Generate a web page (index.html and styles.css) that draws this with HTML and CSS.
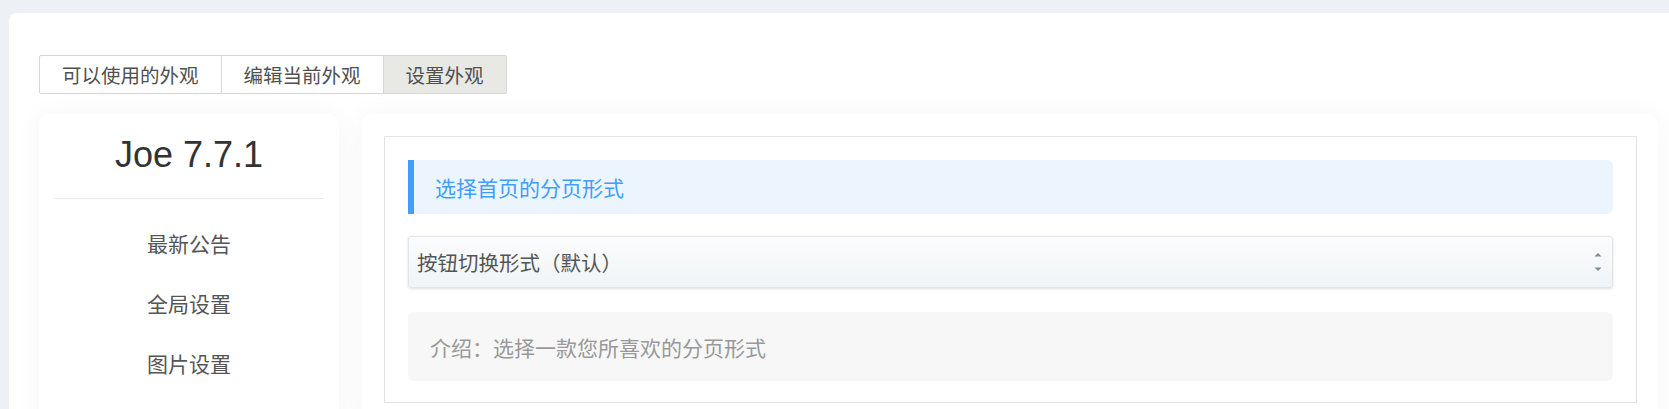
FILE: index.html
```html
<!DOCTYPE html>
<html lang="zh-CN">
<head>
<meta charset="utf-8">
<title>设置外观</title>
<link rel="stylesheet" href="styles.css">
</head>
<body>
<div class="page">
  <div class="panel">
    <div class="tabs">
      <a class="tab">可以使用的外观</a>
      <a class="tab">编辑当前外观</a>
      <a class="tab active">设置外观</a>
    </div>
    <div class="layout">
      <aside class="sidebar">
        <h1 class="brand">Joe 7.7.1</h1>
        <ul class="menu">
          <li class="menu-item">最新公告</li>
          <li class="menu-item">全局设置</li>
          <li class="menu-item">图片设置</li>
        </ul>
      </aside>
      <main class="content">
        <div class="field">
          <div class="field-title">选择首页的分页形式</div>
          <div class="select">
            <span class="select-value">按钮切换形式（默认）</span>
            <span class="select-arrows">
              <svg width="8" height="22" viewBox="0 0 8 22"><path d="M0.5 5.5 L4 2 L7.5 5.5 Z" fill="#7d8b93"/><path d="M0.5 16.5 L4 20 L7.5 16.5 Z" fill="#7d8b93"/></svg>
            </span>
          </div>
          <div class="field-desc">介绍：选择一款您所喜欢的分页形式</div>
        </div>
      </main>
    </div>
  </div>
</div>
</body>
</html>
```
FILE: styles.css
```css
html, body {
  margin: 0;
  padding: 0;
  background: #edf1f5;
  overflow: hidden;
  height: 409px;
}
body {
  font-family: "Noto Sans CJK SC", "Liberation Sans", sans-serif;
}
.page {
  padding: 13px 0 0 9px;
}
.panel {
  width: 1677px;
  height: 420px;
  background: #fff;
  border-radius: 8px;
  box-sizing: border-box;
  padding: 42px 28px 0 30px;
}
.tabs {
  display: flex;
  height: 39px;
}
.tab {
  box-sizing: border-box;
  height: 39px;
  border: 1px solid #d6d6d6;
  border-left: none;
  padding: 0 22px;
  display: flex;
  align-items: center;
  font-size: 19.5px;
  color: #505050;
  background: #fff;
}
.tab:first-child {
  border-left: 1px solid #d6d6d6;
  border-radius: 2px 0 0 2px;
}
.tab:last-child {
  border-radius: 0 2px 2px 0;
}
.tab.active {
  background: #e8e8e4;
}
.layout {
  display: flex;
  gap: 23px;
  margin-top: 20px;
}
.sidebar {
  width: 300px;
  flex: none;
  height: 320px;
  background: #fff;
  border-radius: 10px;
  box-shadow: 0 0 28px rgba(0, 0, 0, 0.045);
  box-sizing: border-box;
  padding: 0 15px;
}
.brand {
  margin: 0;
  padding: 20px 0 22px;
  line-height: 42px;
  font-family: "Liberation Sans", Arial, sans-serif;
  font-weight: normal;
  font-size: 36px;
  color: #333;
  text-align: center;
  border-bottom: 1px solid #ebebf2;
}
.menu {
  list-style: none;
  margin: 0;
  padding: 14px 0 0;
}
.menu-item {
  height: 60px;
  line-height: 60px;
  text-align: center;
  font-size: 21px;
  color: #555;
}
.content {
  width: 1296px;
  flex: none;
  height: 320px;
  background: #fff;
  border-radius: 10px;
  box-shadow: 0 0 28px rgba(0, 0, 0, 0.045);
  box-sizing: border-box;
  padding: 22px 21px 0 22px;
}
.field {
  border: 1px solid #e3e3e3;
  padding: 23px 23px 21px 23px;
}
.field-title {
  height: 54px;
  box-sizing: border-box;
  border-left: 6px solid #409eff;
  border-radius: 0 6px 6px 0;
  background: #ecf4fe;
  color: #409eff;
  font-size: 21px;
  display: flex;
  align-items: center;
  padding-left: 21px;
}
.select {
  margin-top: 22px;
  height: 52px;
  box-sizing: border-box;
  border: 1px solid #e2e4e5;
  border-radius: 3px;
  background: linear-gradient(#fbfcfd, #f0f4f6);
  box-shadow: 0 1px 3px rgba(0, 0, 0, 0.12);
  display: flex;
  align-items: center;
  justify-content: space-between;
  padding: 0 10px 0 8px;
  font-size: 20.5px;
  color: #555;
}
.select-arrows {
  display: flex;
  align-items: center;
}
.select-arrows svg {
  display: block;
}
.field-desc {
  margin-top: 24px;
  height: 69px;
  box-sizing: border-box;
  background: #f7f7f7;
  border-radius: 6px;
  display: flex;
  align-items: center;
  padding-left: 22px;
  font-size: 21px;
  color: #999;
}
```
